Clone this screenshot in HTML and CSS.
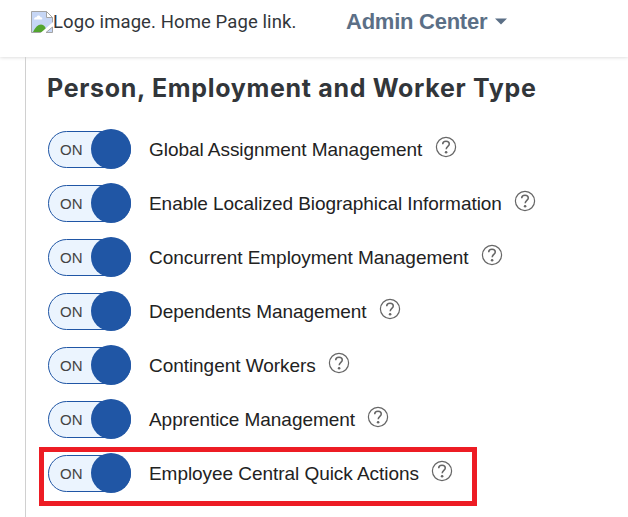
FILE: index.html
```html
<!DOCTYPE html>
<html lang="en">
<head>
<meta charset="utf-8">
<title>Admin Center</title>
<link rel="stylesheet" href="styles.css">
</head>
<body>
<svg class="defs" aria-hidden="true">
  <symbol id="help" viewBox="0 0 22 22">
    <circle cx="11" cy="11" r="9.600" fill="none" stroke="#666" stroke-width="1.2"/>
    <path d="M7.700 8.200C7.700 6.300 9 5.200 11 5.200s3.300 1 3.300 2.800c0 2.300-3.100 2.500-3.100 5.200" fill="none" stroke="#666" stroke-width="1.5"/>
    <circle cx="11.1" cy="16.2" r="1.3" fill="#666"/>
  </symbol>
</svg>
<header class="topbar">
  <a class="home">
    <svg class="broken" viewBox="0 0 22 22" aria-hidden="true">
      <path d="M.5.5h15l6 6v15H.5z" fill="#c6d6f5" stroke="#a3a3a3"/>
      <path d="M15.500.5v6h6z" fill="#fff" stroke="#a3a3a3"/>
      <path d="M3 8.500c0-2 1.500-2.500 2.500-2.300C6 4 9 4 9.500 6.200c2-.2 2.500 2.300 1 2.300z" fill="#fff"/>
      <path d="M2 21c2-4.500 5-7.500 8-7.500s5 3 6 7.500z" fill="#53a52f"/>
      <path d="M9.500 22 22 11v11z" fill="#fff"/>
      <path d="M15 21.500h6.500V16z" fill="#c6d6f5" stroke="#a3a3a3"/>
    </svg><span class="home-text">Logo image. Home Page link.</span>
  </a>
  <div class="module"><span class="module-text">Admin Center</span><svg class="caret" viewBox="0 0 12 7"><path d="M0 .5h12L6 6.500z" fill="#5b6f86"/></svg></div>
</header>
<main class="panel">
  <h1 class="title">Person, Employment and Worker Type</h1>
  <ul class="settings">
    <li class="row"><span class="switch"><span class="on">ON</span><i class="knob"></i></span><span class="label">Global Assignment Management</span><svg class="help"><use href="#help"/></svg></li>
    <li class="row"><span class="switch"><span class="on">ON</span><i class="knob"></i></span><span class="label">Enable Localized Biographical Information</span><svg class="help"><use href="#help"/></svg></li>
    <li class="row"><span class="switch"><span class="on">ON</span><i class="knob"></i></span><span class="label">Concurrent Employment Management</span><svg class="help"><use href="#help"/></svg></li>
    <li class="row"><span class="switch"><span class="on">ON</span><i class="knob"></i></span><span class="label">Dependents Management</span><svg class="help"><use href="#help"/></svg></li>
    <li class="row"><span class="switch"><span class="on">ON</span><i class="knob"></i></span><span class="label">Contingent Workers</span><svg class="help"><use href="#help"/></svg></li>
    <li class="row"><span class="switch"><span class="on">ON</span><i class="knob"></i></span><span class="label">Apprentice Management</span><svg class="help"><use href="#help"/></svg></li>
    <li class="row highlighted"><span class="switch"><span class="on">ON</span><i class="knob"></i></span><span class="label">Employee Central Quick Actions</span><svg class="help"><use href="#help"/></svg></li>
  </ul>
</main>
</body>
</html>
```
FILE: styles.css
```css
*, *::before { box-sizing: border-box; }
body {
  margin: 0;
  height: 517px;
  overflow: hidden;
  background: #fff;
  color: #222;
  font-family: "Liberation Sans", Arial, sans-serif;
}
.defs { display: none; }
.topbar {
  display: flex;
  height: 57px;
  padding-left: 31px;
  box-shadow: 0 0 4px rgba(0, 0, 0, .2);
}
.home { display: flex; width: 315px; padding-top: 11px; }
.broken { width: 22px; height: 22px; }
.home-text {
  font: 18.5px/22px Roboto, sans-serif;
  letter-spacing: .1px;
  color: #32363a;
  white-space: nowrap;
}
.module {
  display: flex;
  padding-top: 8px;
  color: #5b6f86;
  font: bold 22px/27px "Liberation Sans", sans-serif;
  letter-spacing: -.25px;
  white-space: nowrap;
}
.caret { width: 12px; height: 7px; margin: 10px 0 0 8px; }
.panel {
  height: 460px;
  margin-left: 25px;
  padding-left: 21px;
  border-left: 1px solid #d0d0d0;
}
.title {
  margin: 0;
  padding-top: 13px;
  height: 65px;
  font: 700 25px/36px Inter, sans-serif;
  letter-spacing: .68px;
  color: #32363a;
  white-space: nowrap;
}
.settings { margin: 0; padding: 0; list-style: none; }
.row {
  display: flex;
  align-items: center;
  position: relative;
  height: 54px;
  padding-left: 1px;
}
.switch {
  display: flex;
  align-items: center;
  position: relative;
  width: 83px;
  height: 37px;
  margin-right: 18px;
  padding-left: 11px;
  border: 1px solid #2056a5;
  border-radius: 19px;
  background: #ebf4fe;
  font-size: 15px;
  color: #444;
}
.knob {
  position: absolute;
  right: -1px;
  top: -3px;
  width: 40px;
  height: 40px;
  border-radius: 50%;
  background: #2056a5;
}
.label {
  padding-top: 2px;
  font-size: 19px;
  letter-spacing: -.05px;
  white-space: nowrap;
}
.help { width: 22px; height: 22px; margin: -5px 0 0 12.4px; }
.highlighted::before {
  content: "";
  position: absolute;
  left: -8px;
  top: 1px;
  width: 438px;
  height: 59px;
  border: 5px solid #ed1c24;
}
```
